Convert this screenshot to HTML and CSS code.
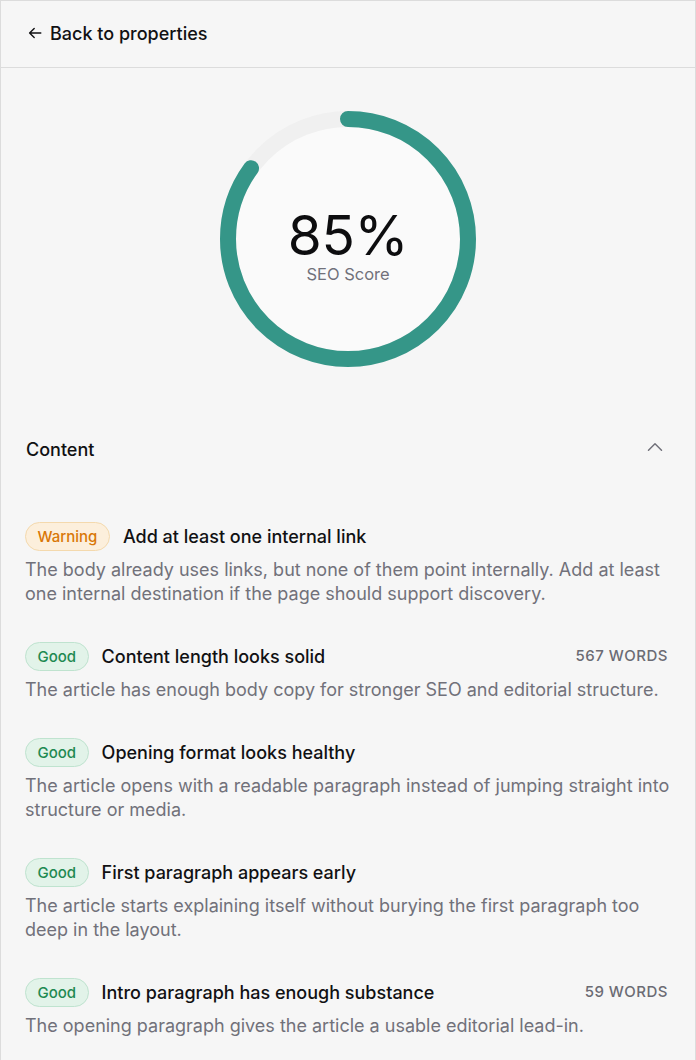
FILE: index.html
```html
<!DOCTYPE html>
<html lang="en">
<head>
<meta charset="utf-8">
<title>SEO Score</title>
<link rel="stylesheet" href="styles.css">
</head>
<body>
<div class="panel">
  <header class="topbar">
    <a class="back" href="#">
      <svg class="back-icon" viewBox="0 0 14 14" width="14" height="14" aria-hidden="true">
        <path d="M12.8 7H1.6M6.2 2.4L1.6 7l4.6 4.6" fill="none" stroke="currentColor" stroke-width="1.4" stroke-linecap="round" stroke-linejoin="round"/>
      </svg>
      <span>Back to properties</span>
    </a>
  </header>

  <section class="score">
    <div class="gauge">
      <svg class="gauge-ring" viewBox="0 0 256 256" width="256" height="256" aria-hidden="true">
        <circle cx="128" cy="128" r="120" fill="#fafafa" stroke="#f0f0f0" stroke-width="16"/>
        <circle cx="128" cy="128" r="120" fill="none" stroke="#359688" stroke-width="16" stroke-linecap="round"
          stroke-dasharray="640.9 754" transform="rotate(-90 128 128)"/>
      </svg>
      <div class="gauge-label">
        <div class="gauge-value">85%</div>
        <div class="gauge-caption">SEO Score</div>
      </div>
    </div>
  </section>

  <section class="group">
    <div class="group-head">
      <h2 class="group-title">Content</h2>
      <svg class="chevron" viewBox="0 0 16 10" width="16" height="10" aria-hidden="true">
        <path d="M1.5 8.2L8 1.8l6.5 6.4" fill="none" stroke="currentColor" stroke-width="1.5" stroke-linecap="round" stroke-linejoin="round"/>
      </svg>
    </div>

    <ul class="checks">
      <li class="check">
        <div class="check-row">
          <span class="badge badge-warn">Warning</span>
          <span class="check-title">Add at least one internal link</span>
        </div>
        <p class="check-desc">The body already uses links, but none of them point internally. Add at least one internal destination if the page should support discovery.</p>
      </li>
      <li class="check">
        <div class="check-row">
          <span class="badge badge-good">Good</span>
          <span class="check-title">Content length looks solid</span>
          <span class="check-meta">567 words</span>
        </div>
        <p class="check-desc">The article has enough body copy for stronger SEO and editorial structure.</p>
      </li>
      <li class="check">
        <div class="check-row">
          <span class="badge badge-good">Good</span>
          <span class="check-title">Opening format looks healthy</span>
        </div>
        <p class="check-desc">The article opens with a readable paragraph instead of jumping straight into structure or media.</p>
      </li>
      <li class="check">
        <div class="check-row">
          <span class="badge badge-good">Good</span>
          <span class="check-title">First paragraph appears early</span>
        </div>
        <p class="check-desc">The article starts explaining itself without burying the first paragraph too deep in the layout.</p>
      </li>
      <li class="check">
        <div class="check-row">
          <span class="badge badge-good">Good</span>
          <span class="check-title">Intro paragraph has enough substance</span>
          <span class="check-meta">59 words</span>
        </div>
        <p class="check-desc">The opening paragraph gives the article a usable editorial lead-in.</p>
      </li>
    </ul>
  </section>
</div>
</body>
</html>
```

FILE: styles.css
```css
* {
  box-sizing: border-box;
}

html, body {
  margin: 0;
  padding: 0;
  background: #f6f6f6;
}

body {
  font-family: Inter, "Noto Sans", "Liberation Sans", sans-serif;
  color: #111113;
}

.panel {
  width: 696px;
  min-height: 1060px;
  border: 1px solid #dcdcdc;
  border-bottom: none;
  background: #f6f6f6;
}

/* top bar */
.topbar {
  height: 67px;
  border-bottom: 1px solid #dcdcdc;
  display: flex;
  align-items: center;
  padding-left: 27px;
  padding-bottom: 2px;
}

.back {
  display: flex;
  align-items: center;
  gap: 8px;
  color: #111113;
  text-decoration: none;
  font-size: 18px;
  font-weight: 500;
}

.back-icon {
  display: block;
}

/* score gauge */
.score {
  display: flex;
  justify-content: center;
  padding-top: 43px;
}

.gauge {
  position: relative;
  width: 256px;
  height: 256px;
}

.gauge-ring {
  display: block;
}

.gauge-label {
  position: absolute;
  inset: 0;
  display: flex;
  flex-direction: column;
  align-items: center;
  padding-top: 95px;
}

.gauge-value {
  font-size: 55px;
  font-weight: 400;
  line-height: 58px;
  color: #0d0d0f;
  letter-spacing: -0.3px;
}

.gauge-caption {
  font-size: 16.5px;
  line-height: 20px;
  color: #71717a;
}

/* checks group */
.group {
  padding: 0 24px 0 24px;
}

.group-head {
  display: flex;
  align-items: center;
  justify-content: space-between;
  margin-top: 70px;
  height: 24px;
}

.group-title {
  margin: 0 0 0 1px;
  font-size: 18px;
  font-weight: 500;
  color: #111113;
}

.chevron {
  display: block;
  color: #71717a;
  margin-right: 8px;
  margin-top: -4px;
}

.checks {
  list-style: none;
  margin: 60px 0 0;
  padding: 0;
  display: flex;
  flex-direction: column;
  gap: 35px;
}

.check-row {
  display: flex;
  align-items: center;
  gap: 13px;
  height: 30px;
}

.badge {
  display: inline-flex;
  align-items: center;
  height: 29px;
  padding: 0 11.5px;
  border-radius: 15px;
  font-size: 15px;
  font-weight: 500;
  border: 1px solid;
}

.badge-warn {
  color: #d97706;
  background: #fcefdc;
  border-color: #f4d9ad;
}

.badge-good {
  color: #1f8a52;
  background: #e2f3e9;
  border-color: #bfe3cf;
}

.check-title {
  font-size: 18px;
  font-weight: 500;
  color: #111113;
}

.check-meta {
  margin-left: auto;
  margin-right: 3px;
  margin-top: -2px;
  font-size: 15px;
  font-weight: 500;
  text-transform: uppercase;
  letter-spacing: 0.5px;
  color: #6b6b73;
}

.check-desc {
  margin: 7px 0 0;
  font-size: 18px;
  line-height: 24px;
  color: #71717a;
}
```
